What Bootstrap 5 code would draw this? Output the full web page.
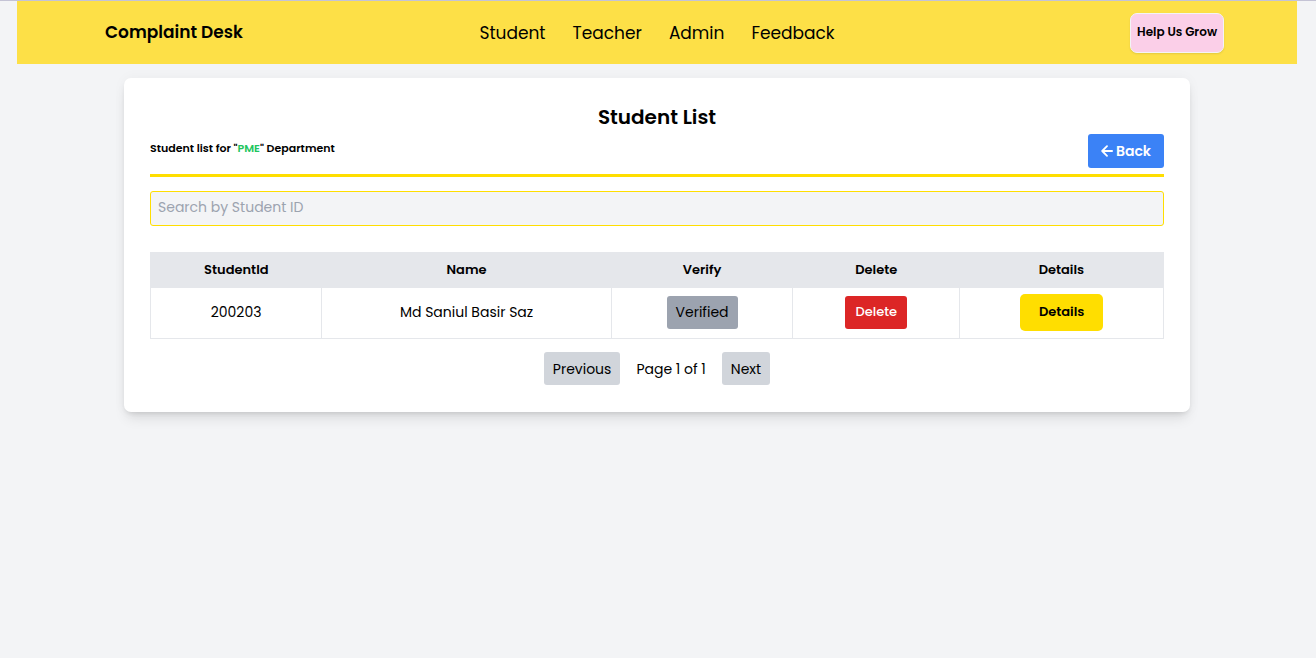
<!DOCTYPE html>
<html lang="en">
<head>
<meta charset="utf-8">
<meta name="viewport" content="width=device-width, initial-scale=1">
<title>Complaint Desk</title>
<link href="https://cdn.jsdelivr.net/npm/bootstrap@5.3.0/dist/css/bootstrap.min.css" rel="stylesheet">
<style>
  body { min-height: 100vh; font-family: Poppins, Inter, sans-serif; font-size: 14px; line-height: 20px; color: #000; background: #f3f4f6; border-top: 1px solid #c4c3d5; padding-right: 2px; }
  .site-nav { max-width: 1280px; height: 63px; background: #fde047; padding: 0 73px 0 88px; }
  .site-nav a { color: #000; text-decoration: none; white-space: nowrap; }
  .brand-link { font-size: 17px; }
  .brand-link, .help-btn, .panel h1, .panel h2, .students th, .flat-details { font-weight: 600; }
  .nav-links { gap: 27px; font-size: 17px; }
  .nav-brand, .nav-help { flex: 1 1 0; }
  .site-nav .nav-links { margin-right: 15px; }
  .help-btn { height: 40px; padding: 0 6px 2px; font-size: 12px; color: #000; background: #fbcfe8; border: 1px solid #f3f4f6; border-radius: 7px; box-shadow: 0 1px 2px rgba(0,0,0,.1); }
  .panel { max-width: 1066px; margin-top: 14px; padding: 26px 26px 27px; background: #fff; border-radius: 7px; box-shadow: 0 9px 13px -3px rgba(0,0,0,.1), 0 3px 5px -2px rgba(0,0,0,.1), 0 0 13px rgba(0,0,0,.04); }
  .panel h1 { font-size: 20px; line-height: 26px; margin-bottom: 4px; }
  .panel-head { border-bottom: 3px solid #ffde00; padding-bottom: 6px; margin-bottom: 14px; }
  .panel h2 { font-size: 11px; line-height: 28px; margin: 0; }
  .dept { color: #22c55e; }
  .back-btn { height: 34px; padding: 0 13px; gap: 3px; color: #fff; font-weight: 600; text-decoration: none; background: #3b82f6; border-radius: 3px; }
  .search-box { height: 35px; padding: 0 7px 2px; color: #000; background: #f3f4f6; border: 1px solid #ffde00; border-radius: 3px; margin-bottom: 26px; }
  .search-box::placeholder { color: #9ca3af; }
  .students { table-layout: fixed; width: 100%; text-align: center; margin-bottom: 13px; border: 1px solid #e5e7eb; }
  .students th { height: 35px; padding: 0 0 1px; font-size: 13px; background: #e5e7eb; }
  .students td { height: 51px; padding: 0 0 2px; border: 1px solid #e5e7eb; }
  .flat { height: 33px; padding: 0 9px; border: 0; border-radius: 3px; color: #000; white-space: nowrap; }
  .flat-verified { background: #9ca3af; }
  .flat-delete { padding: 0 10px; background: #dc2626; color: #fff; font-size: 13px; font-weight: 500; }
  .flat-details { height: 37px; padding: 0 19px; background: #ffde00; border-radius: 5px; font-size: 13px; }
  .flat-page { background: #d1d5db; }
  .pager { gap: 16px; }
</style>
</head>
<body>
<nav class="site-nav mx-auto d-flex align-items-center">
  <div class="nav-brand"><a class="brand-link" href="#">Complaint Desk</a></div>
  <div class="nav-links d-flex">
    <a href="#">Student</a><a href="#">Teacher</a><a href="#">Admin</a><a href="#">Feedback</a>
  </div>
  <div class="nav-help text-end"><button type="button" class="help-btn">Help Us Grow</button></div>
</nav>
<main class="panel mx-auto">
  <h1 class="text-center">Student List</h1>
  <div class="panel-head d-flex justify-content-between align-items-start">
    <h2>Student list for "<span class="dept">PME</span>" Department</h2>
    <a class="back-btn d-flex align-items-center" href="#">
      <svg width="12" height="12" viewBox="0 0 12 12" fill="none" stroke="currentColor" stroke-width="1.8" stroke-linecap="round" stroke-linejoin="round" aria-hidden="true"><path d="M6 1.2 1.2 6 6 10.8M1.4 6h9.7"/></svg>
      Back
    </a>
  </div>
  <input type="text" class="search-box d-block w-100" placeholder="Search by Student ID" aria-label="Search by Student ID">
  <table class="students">
    <colgroup><col style="width:16.9%"><col style="width:28.6%"><col style="width:17.9%"><col style="width:16.5%"><col style="width:20.1%"></colgroup>
    <thead><tr><th>StudentId</th><th>Name</th><th>Verify</th><th>Delete</th><th>Details</th></tr></thead>
    <tbody>
      <tr>
        <td>200203</td>
        <td>Md Saniul Basir Saz</td>
        <td><button type="button" class="flat flat-verified">Verified</button></td>
        <td><button type="button" class="flat flat-delete">Delete</button></td>
        <td><button type="button" class="flat flat-details">Details</button></td>
      </tr>
    </tbody>
  </table>
  <div class="pager d-flex justify-content-center align-items-center">
    <button type="button" class="flat flat-page">Previous</button>
    <span>Page 1 of 1</span>
    <button type="button" class="flat flat-page">Next</button>
  </div>
</main>
<script src="https://cdn.jsdelivr.net/npm/bootstrap@5.3.0/dist/js/bootstrap.bundle.min.js"></script>
</body>
</html>
